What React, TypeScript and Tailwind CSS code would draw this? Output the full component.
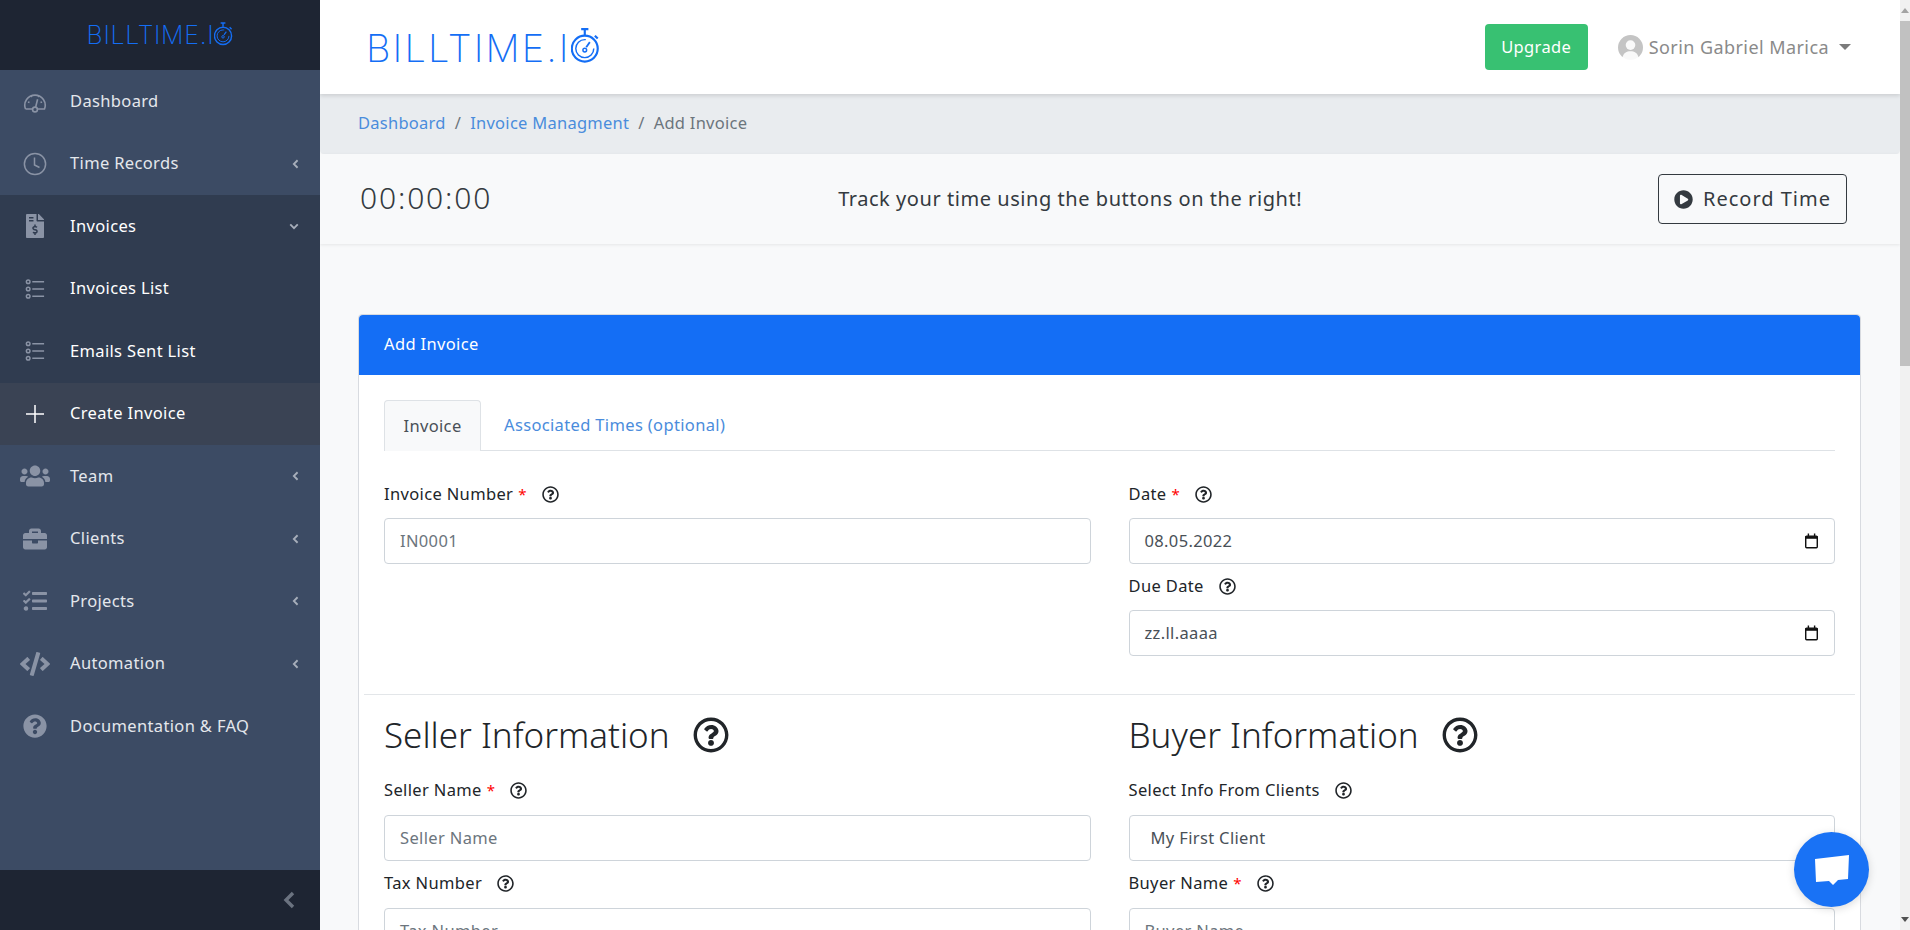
import { FaBriefcase, FaCode, FaFileInvoiceDollar, FaPlayCircle, FaQuestionCircle, FaRegQuestionCircle, FaTasks, FaUsers } from "react-icons/fa";
import { ReactNode } from "react";

const Stopwatch = ({ className }: { className: string }) => (
  <svg viewBox="0 0 40 50" fill="none" stroke="#146ef5" className={className}>
    <circle cx="19" cy="30" r="18" strokeWidth="3" />
    <circle cx="19" cy="30" r="12.5" strokeWidth="2" strokeDasharray="60 20" />
    <path d="M14 3h10M19 3v8M33 12l4 4" strokeWidth="3" />
    <path d="M21 28l5-7" strokeWidth="2.5" />
    <circle cx="19" cy="32" r="2.6" strokeWidth="2" />
  </svg>
);

const Speedometer = () => (
  <svg viewBox="0 0 24 24" fill="none" stroke="currentColor" strokeWidth="1.6" className="h-[24px] w-[24px]">
    <path d="M2.5 20h7M15 20h6.5a10.2 10.2 0 1 0-19 0" />
    <circle cx="12" cy="20.5" r="2.4" />
    <path d="M12.6 18.2l2-8M5 13l1.5.6M19 13l-1.5.6M8 6.5l.8 1.5M16 6.5l-.8 1.5" />
  </svg>
);

const Clock = () => (
  <svg viewBox="0 0 24 24" fill="none" stroke="currentColor" strokeWidth="1.5" className="h-[24px] w-[24px]">
    <circle cx="12" cy="12" r="10.6" />
    <path d="M11.5 5.500v7.500l5 2.500" />
  </svg>
);

const ListRich = () => (
  <svg viewBox="0 0 22 22" fill="none" stroke="currentColor" strokeWidth="1.6" className="h-[20px] w-[20px]">
    <circle cx="3.5" cy="3" r="2" />
    <circle cx="3.5" cy="11" r="2" />
    <circle cx="3.5" cy="19" r="2" />
    <path d="M8 3h13M8 11h13M8 19h13" />
  </svg>
);

const Plus = () => (
  <svg viewBox="0 0 24 24" fill="none" stroke="currentColor" strokeWidth="1.5" className="h-[24px] w-[24px]">
    <path d="M12 3v18M3 12h18" />
  </svg>
);

const ChevronLeft = () => (
  <svg viewBox="0 0 8 12" fill="none" stroke="currentColor" strokeWidth="2.2" className="h-[10px] w-[7px]">
    <path d="M6.500 1.500L2 6l4.500 4.500" />
  </svg>
);

const ChevronDown = () => (
  <svg viewBox="0 0 12 8" fill="none" stroke="currentColor" strokeWidth="2.2" className="h-[7px] w-[10px]">
    <path d="M1.500 1.500L6 6l4.500-4.500" />
  </svg>
);

const Calendar = () => (
  <svg viewBox="0 0 16 18" className="h-[16px] w-[15px]" fill="none" stroke="#111" strokeWidth="1.6">
    <rect x="1.500" y="3.500" width="13" height="13" rx="1" />
    <path d="M1 5h14" strokeWidth="3" />
    <path d="M4.500 0.500v3M11.500 0.500v3" />
  </svg>
);

type NavItem = { label: string; icon: ReactNode; arrow?: "left" | "down"; tone: "main" | "open" | "sub" | "active" };

const nav: NavItem[] = [
  { label: "Dashboard", icon: <Speedometer />, tone: "main" },
  { label: "Time Records", icon: <Clock />, arrow: "left", tone: "main" },
  { label: "Invoices", icon: <FaFileInvoiceDollar className="h-[24px] w-[18px]" />, arrow: "down", tone: "open" },
  { label: "Invoices List", icon: <ListRich />, tone: "sub" },
  { label: "Emails Sent List", icon: <ListRich />, tone: "sub" },
  { label: "Create Invoice", icon: <span className="text-white"><Plus /></span>, tone: "active" },
  { label: "Team", icon: <FaUsers className="h-[24px] w-[30px]" />, arrow: "left", tone: "main" },
  { label: "Clients", icon: <FaBriefcase className="h-[24px] w-[24px]" />, arrow: "left", tone: "main" },
  { label: "Projects", icon: <FaTasks className="h-[24px] w-[24px]" />, arrow: "left", tone: "main" },
  { label: "Automation", icon: <FaCode className="h-[24px] w-[30px]" />, arrow: "left", tone: "main" },
  { label: "Documentation & FAQ", icon: <FaQuestionCircle className="h-[24px] w-[24px]" />, tone: "main" },
];

const toneClass = {
  main: "text-[#e4e7ec]",
  open: "bg-[#303c50] text-white",
  sub: "bg-[#303c50] text-white",
  active: "bg-[#3a4354] text-white",
};

const Sidebar = () => (
  <aside className="flex h-full w-[320px] shrink-0 flex-col bg-[#3c4b64]">
    <div className="flex h-[70px] items-center justify-center bg-[#1e2533] pt-[1px]">
      <span className="font-['Inter',sans-serif] text-[25px] font-extralight leading-none tracking-[0.7px] text-[#146ef5]">BILLTIME.I</span>
      <Stopwatch className="mb-[5px] h-[25px] w-[19px]" />
    </div>
    <nav className="flex-1">
      {nav.map((item) => (
        <div key={item.label} className={`flex h-[62.5px] items-center pr-[21px] ${toneClass[item.tone]}`}>
          <span className="flex w-[70px] shrink-0 justify-center text-[#8a93a5]">{item.icon}</span>
          <span className="flex-1 text-[16.5px] tracking-[0.35px]">{item.label}</span>
          {item.arrow === "left" && <span className="text-[#a7aeba]"><ChevronLeft /></span>}
          {item.arrow === "down" && <span className="text-[#a7aeba]"><ChevronDown /></span>}
        </div>
      ))}
    </nav>
    <div className="flex h-[60px] items-center justify-end bg-[#1e2533] pr-[25px] text-[#6b7380]">
      <svg viewBox="0 0 12 18" fill="none" stroke="currentColor" strokeWidth="3.4" className="h-[18px] w-[12px]">
        <path d="M10 2L3 9l7 7" />
      </svg>
    </div>
  </aside>
);

const Help = ({ big }: { big?: boolean }) =>
  big ? (
    <FaRegQuestionCircle className="h-[36px] w-[36px] text-[#212529]" />
  ) : (
    <FaRegQuestionCircle className="h-[17px] w-[17px] text-[#212529]" />
  );

const Label = ({ text, required }: { text: string; required?: boolean }) => (
  <div className="flex h-6 items-center text-[16.5px] tracking-[0.35px] text-[#212529]">
    <span>{text}</span>
    {required && <span className="ml-[5px] text-[15px] text-[#ff0000]">*</span>}
    <span className="ml-[15px] flex items-center"><Help /></span>
  </div>
);

const Field = ({ value, muted, calendar, inset }: { value: string; muted?: boolean; calendar?: boolean; inset?: boolean }) => (
  <div className="flex h-[46px] items-center justify-between rounded-[4px] border border-[#ced4da] bg-white pl-[15px] pr-[15px]">
    <span className={`${muted ? "text-[#6c757d]" : "text-[#495057]"} ${inset ? "pl-[6px]" : ""} text-[16.5px] tracking-[0.35px]`}>{value}</span>
    {calendar && <Calendar />}
  </div>
);

const ScrollBar = () => (
  <div className="flex h-full w-[10px] shrink-0 flex-col items-center bg-[#f1f1f1]">
    <div className="flex h-[21px] w-full items-center justify-center">
      <div className="h-0 w-0 border-x-[4px] border-b-[5px] border-x-transparent border-b-[#a3a3a3]" />
    </div>
    <div className="h-[345px] w-full bg-[#c1c1c1]" />
    <div className="flex-1" />
    <div className="flex h-[21px] w-full items-center justify-center">
      <div className="h-0 w-0 border-x-[4px] border-t-[5px] border-x-transparent border-t-[#505050]" />
    </div>
  </div>
);

export default function App() {
  return (
    <div className="relative flex h-[930px] w-[1910px] overflow-hidden bg-[#f8f9fa] font-['Noto_Sans',sans-serif]">
      <Sidebar />
      <main className="flex h-full min-w-0 flex-1 flex-col overflow-hidden">
        <header className="relative z-10 flex h-[94px] shrink-0 items-center justify-between bg-white pl-[46px] pr-[49px] shadow-[0_2px_4px_rgba(0,0,0,0.12)]">
          <div className="flex items-end">
            <span className="font-['Inter',sans-serif] text-[38px] font-extralight leading-none tracking-[2.1px] text-[#146ef5]">BILLTIME.I</span>
            <Stopwatch className="mb-[4px] h-[36px] w-[29px]" />
          </div>
          <div className="flex items-center">
            <button className="h-[46px] w-[103px] rounded-[4px] bg-[#38c172] text-[16.5px] tracking-[0.35px] text-white">Upgrade</button>
            <div className="ml-[30px] flex items-center text-[18px] tracking-[0.43px] text-[#8a8a8a]">
              <svg viewBox="0 0 26 26" className="mr-[6px] h-[25px] w-[25px]">
                <circle cx="13" cy="13" r="13" fill="#c4c4c4" />
                <circle cx="13" cy="10.500" r="5" fill="#fff" opacity="0.9" />
                <path d="M4.500 24c1-5.500 4.500-7 8.500-7s7.500 1.500 8.500 7a13 13 0 0 1-17 0z" fill="#fff" opacity="0.9" />
              </svg>
              <span>Sorin Gabriel Marica</span>
              <div className="ml-[10px] h-0 w-0 border-x-[6px] border-t-[6px] border-x-transparent border-t-[#7b7b7b]" />
            </div>
          </div>
        </header>

        <div className="flex h-[60px] shrink-0 items-center gap-[9px] rounded-b-[4px] bg-[#e9ecef] pb-[2px] pl-[38px] text-[16.5px] tracking-[0.26px]">
          <span className="text-[#4a8cdc]">Dashboard</span>
          <span className="text-[#6c757d]">/</span>
          <span className="text-[#4a8cdc]">Invoice Managment</span>
          <span className="text-[#6c757d]">/</span>
          <span className="text-[#6c757d]">Add Invoice</span>
        </div>

        <div className="flex h-[90px] shrink-0 items-center justify-between bg-[#f8f9fa] pl-[40px] pr-[53px] text-[#343a40] shadow-[0_1px_3px_rgba(0,0,0,0.08)]">
          <span className="mb-[4px] text-[30px] font-light tracking-[1.85px]">00:00:00</span>
          <span className="mr-[10px] text-[20px] tracking-[0.55px]">Track your time using the buttons on the right!</span>
          <button className="flex h-[50px] w-[189px] items-center justify-center rounded-[4px] border border-[#343a40] text-[20px] tracking-[1px]">
            <FaPlayCircle className="mr-[10px] h-[19px] w-[19px]" />
            Record Time
          </button>
        </div>

        <section className="ml-[38px] mr-[39px] mt-[70px] shrink-0 rounded-[4px] border border-[#d8dbe0] bg-white">
          <div className="flex h-[60px] items-center rounded-t-[4px] bg-[#146ef5] pb-[1px] pl-[25px] text-[16.5px] tracking-[0.35px] text-white">Add Invoice</div>
          <div className="pb-10 pl-[25px] pr-[25px] pt-[25px]">
            <div className="flex h-[51px] border-b border-[#dee2e6] text-[16.5px] tracking-[0.35px]">
              <div className="flex h-[51px] w-[97px] items-center justify-center rounded-t-[4px] border border-b-0 border-[#dee2e6] bg-[#f8f9fa] text-[#495057]">Invoice</div>
              <div className="flex h-[51px] items-center pl-[23px] text-[#4a8cdc]">Associated Times (optional)</div>
            </div>

            <div className="mt-[31px] grid grid-cols-2 gap-x-[38px]">
              <div>
                <Label text="Invoice Number" required />
                <div className="mt-3"><Field value="IN0001" muted /></div>
              </div>
              <div>
                <Label text="Date" required />
                <div className="mt-3"><Field value="08.05.2022" calendar /></div>
                <div className="mt-[10px]"><Label text="Due Date" /></div>
                <div className="mt-3"><Field value="zz.ll.aaaa" calendar /></div>
              </div>
            </div>

            <div className="-mx-5 mt-[38px] border-t border-[#e3e6e9]" />

            <div className="mt-[18px] grid grid-cols-2 gap-x-[38px]">
              <div>
                <h2 className="flex h-[44px] items-center text-[35px] font-light text-[#212529]">
                  Seller Information <span className="ml-[23px]"><Help big /></span>
                </h2>
                <div className="mt-[21px]"><Label text="Seller Name" required /></div>
                <div className="mt-[13px]"><Field value="Seller Name" muted /></div>
                <div className="mt-[10px]"><Label text="Tax Number" /></div>
                <div className="mt-[13px]"><Field value="Tax Number" muted /></div>
              </div>
              <div>
                <h2 className="flex h-[44px] items-center text-[35px] font-light text-[#212529]">
                  Buyer Information <span className="ml-[23px]"><Help big /></span>
                </h2>
                <div className="mt-[21px]"><Label text="Select Info From Clients" /></div>
                <div className="mt-[13px]"><Field value="My First Client" inset /></div>
                <div className="mt-[10px]"><Label text="Buyer Name" required /></div>
                <div className="mt-[13px]"><Field value="Buyer Name" muted /></div>
              </div>
            </div>
          </div>
        </section>
      </main>
      <ScrollBar />

      <button className="absolute left-[1794px] top-[832px] z-20 flex h-[75px] w-[75px] items-center justify-center rounded-full bg-[#1972f5] shadow-[0_2px_8px_rgba(0,0,0,0.15)]">
        <svg viewBox="0 0 36 32" className="h-[32px] w-[36px]" fill="#fff">
          <path d="M1 5L35 1l-1 24-10 1-5 5-4-4-13 1z" />
        </svg>
      </button>
    </div>
  );
}
